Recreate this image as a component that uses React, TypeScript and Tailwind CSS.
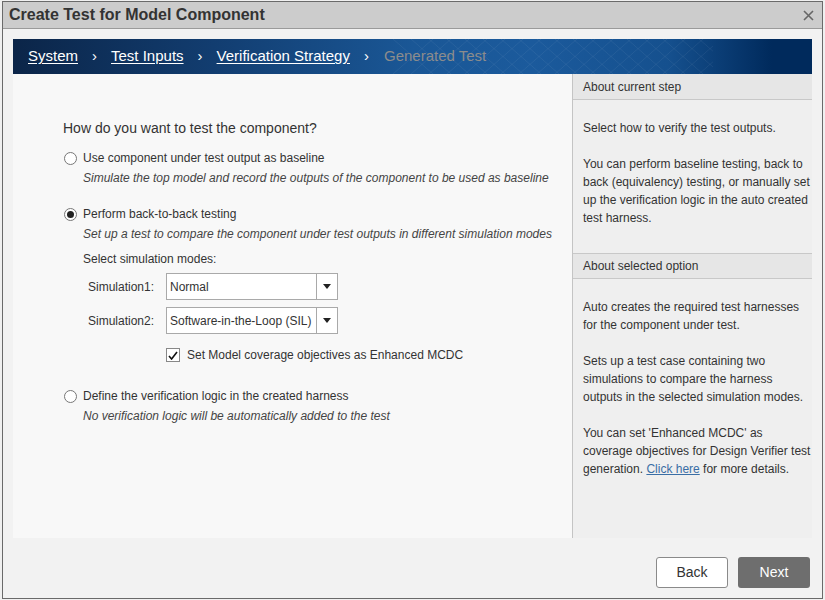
import React from "react";

const crumbs = ["System", "Test Inputs", "Verification Strategy"];

function Radio({ checked }: { checked?: boolean }) {
  return (
    <span className="w-[13px] h-[13px] rounded-full border border-[#777] bg-white flex items-center justify-center shrink-0">
      {checked && <span className="w-[7px] h-[7px] rounded-full bg-[#222]" />}
    </span>
  );
}

function Select({ value }: { value: string }) {
  return (
    <div className="w-[172px] h-[27px] flex border border-[#a9a9a9] bg-white">
      <div className="flex-1 flex items-center pl-[3px] text-[12px] text-[#333]">{value}</div>
      <div className="w-[21px] border-l border-[#a9a9a9] flex items-center justify-center">
        <svg width="8" height="5" viewBox="0 0 8 5">
          <path d="M0 0h8L4 5z" fill="#222" />
        </svg>
      </div>
    </div>
  );
}

export default function App() {
  return (
    <div className="w-[825px] h-[600px] bg-[#f0f0f0] pl-[2px] pt-[1px]" style={{ fontFamily: '"Liberation Sans", Arial, sans-serif' }}>
      <div className="w-[821px] h-[598px] border border-[#6a6a6a] bg-[#f2f2f2] flex flex-col">
        {/* title bar */}
        <div className="h-[27px] bg-[#cccccc] border-b border-[#9a9a9a] flex items-center justify-between pl-[6px] pr-[7px] shrink-0">
          <span className="text-[16px] font-bold text-[#333]">Create Test for Model Component</span>
          <svg width="11" height="11" viewBox="0 0 11 11" className="mr-[1px]">
            <path d="M1 1l9 9M10 1l-9 9" stroke="#666" strokeWidth="1.6" />
          </svg>
        </div>

        <div className="flex-1 flex flex-col px-[10px] pt-[10px]">
          {/* banner */}
          <div className="h-[35px] shrink-0 flex items-center pl-[15px] text-[15px] bg-[linear-gradient(90deg,#0b2548_0%,#123d70_25%,#1a5796_50%,#1b5a9c_65%,#15508e_82%,#002a5c_95%,#002a5c_100%)] relative overflow-hidden">
            <svg className="absolute left-[380px] top-0" width="320" height="35" viewBox="0 0 320 35">
              {Array.from({ length: 18 }).map((_, i) => (
                <path key={"a" + i} d={`M${i * 18} 35 L${i * 18 + 40} 0`} stroke="#ffffff" strokeOpacity="0.06" />
              ))}
              {Array.from({ length: 18 }).map((_, i) => (
                <path key={"b" + i} d={`M${i * 18} 0 L${i * 18 + 40} 35`} stroke="#ffffff" strokeOpacity="0.06" />
              ))}
            </svg>
            {crumbs.map((c) => (
              <React.Fragment key={c}>
                <span className="text-white underline underline-offset-2 relative">{c}</span>
                <span className="text-white mx-[14px] relative">›</span>
              </React.Fragment>
            ))}
            <span className="text-[#8c8c8c] relative ml-[1px]">Generated Test</span>
          </div>

          {/* content */}
          <div className="h-[464px] flex shrink-0">
            <div className="w-[559px] bg-[#f8f8f8] text-[#333] pl-[50px] pt-[45px]">
              <div className="text-[14px] leading-[18px]">How do you want to test the component?</div>

              <div className="mt-[13px] flex items-center gap-[6px] text-[12px] leading-[16px] ml-[1px]">
                <Radio />
                <span>Use component under test output as baseline</span>
              </div>
              <div className="mt-[4px] ml-[20px] text-[12px] leading-[16px] italic text-[#444]">
                Simulate the top model and record the outputs of the component to be used as baseline
              </div>

              <div className="mt-[20px] flex items-center gap-[6px] text-[12px] leading-[16px] ml-[1px]">
                <Radio checked />
                <span>Perform back-to-back testing</span>
              </div>
              <div className="mt-[4px] ml-[20px] text-[12px] leading-[16px] italic text-[#444]">
                Set up a test to compare the component under test outputs in different simulation modes
              </div>

              <div className="mt-[9px] ml-[20px] text-[12px] leading-[16px]">Select simulation modes:</div>

              <div className="mt-[6px] ml-[25px] flex items-center">
                <span className="w-[78px] text-[12px]">Simulation1:</span>
                <Select value="Normal" />
              </div>
              <div className="mt-[7px] ml-[25px] flex items-center">
                <span className="w-[78px] text-[12px]">Simulation2:</span>
                <Select value="Software-in-the-Loop (SIL)" />
              </div>
              <div className="mt-[12px] ml-[103px] flex items-center gap-[7px] text-[12px]">
                <span className="w-[14px] h-[14px] border border-[#888] bg-white flex items-center justify-center">
                  <svg width="10" height="9" viewBox="0 0 10 9">
                    <path d="M1 5l2.6 3L9 1" stroke="#111" strokeWidth="1.6" fill="none" />
                  </svg>
                </span>
                <span>Set Model coverage objectives as Enhanced MCDC</span>
              </div>

              <div className="mt-[24px] flex items-center gap-[6px] text-[12px] leading-[16px] ml-[1px]">
                <Radio />
                <span>Define the verification logic in the created harness</span>
              </div>
              <div className="mt-[4px] ml-[20px] text-[12px] leading-[16px] italic text-[#444]">
                No verification logic will be automatically added to the test
              </div>
            </div>

            <div className="flex-1 bg-[#efefef] border-l border-[#c4c4c4] text-[12px] text-[#333]">
              <div className="h-[26px] bg-[#e6e6e6] border-b border-[#c8c8c8] flex items-center pl-[10px]">About current step</div>
              <div className="pl-[10px] pr-0 pt-[19px] pb-[26px] leading-[18px]">
                <p>Select how to verify the test outputs.</p>
                <p className="mt-[18px]">
                  You can perform baseline testing, back to back (equivalency) testing, or manually set up the verification logic in the auto created test harness.
                </p>
              </div>
              <div className="h-[26px] bg-[#e6e6e6] border-y border-[#c8c8c8] flex items-center pl-[10px]">About selected option</div>
              <div className="pl-[10px] pr-0 pt-[19px] leading-[18px]">
                <p>Auto creates the required test harnesses for the component under test.</p>
                <p className="mt-[18px]">
                  Sets up a test case containing two simulations to compare the harness outputs in the selected simulation modes.
                </p>
                <p className="mt-[18px]">
                  You can set 'Enhanced MCDC' as coverage objectives for Design Verifier test generation.{" "}
                  <span className="text-[#3a6ea5] underline">Click here</span> for more details.
                </p>
              </div>
            </div>
          </div>

          {/* footer */}
          <div className="flex-1 flex items-start justify-end gap-[10px] pt-[19px] pr-[2px]">
            <button className="w-[72px] h-[31px] bg-white border border-[#8a8a8a] rounded-[3px] text-[14px] text-[#333]">Back</button>
            <button className="w-[72px] h-[31px] bg-[#6e6e6e] rounded-[3px] text-[14px] text-white">Next</button>
          </div>
        </div>
      </div>
    </div>
  );
}
